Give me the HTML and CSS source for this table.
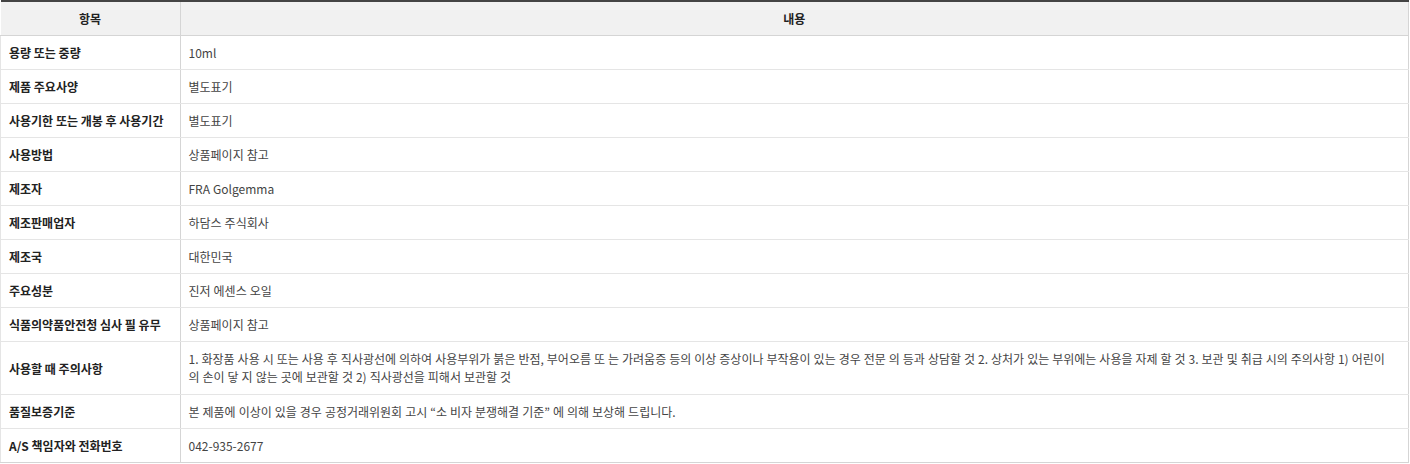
FILE: index.html
```html
<!DOCTYPE html>
<html>
<head>
    <meta charset="utf-8">
    <title>상품정보 제공고시</title>
    <link rel="stylesheet" href="styles.css">
</head>
<body>

<table class="info-table">
    <thead>
        <tr>
            <th class="col-key">항목</th>
            <th>내용</th>
        </tr>
    </thead>
    <tbody>
        <tr><th>용량 또는 중량</th><td>10ml</td></tr>
        <tr><th>제품 주요사양</th><td>별도표기</td></tr>
        <tr><th>사용기한 또는 개봉 후 사용기간</th><td>별도표기</td></tr>
        <tr><th>사용방법</th><td>상품페이지 참고</td></tr>
        <tr><th>제조자</th><td>FRA Golgemma</td></tr>
        <tr><th>제조판매업자</th><td>하담스 주식회사</td></tr>
        <tr><th>제조국</th><td>대한민국</td></tr>
        <tr><th>주요성분</th><td>진저 에센스 오일</td></tr>
        <tr><th>식품의약품안전청 심사 필 유무</th><td>상품페이지 참고</td></tr>
        <tr><th>사용할 때 주의사항</th><td class="long">1. 화장품 사용 시 또는 사용 후 직사광선에 의하여 사용부위가 붉은 반점, 부어오름 또 는 가려움증 등의 이상 증상이나 부작용이 있는 경우 전문 의 등과 상담할 것 2. 상처가 있는 부위에는 사용을 자제 할 것 3. 보관 및 취급 시의 주의사항 1) 어린이의 손이 닿 지 않는 곳에 보관할 것 2) 직사광선을 피해서 보관할 것</td></tr>
        <tr><th>품질보증기준</th><td>본 제품에 이상이 있을 경우 공정거래위원회 고시 “소 비자 분쟁해결 기준” 에 의해 보상해 드립니다.</td></tr>
        <tr><th>A/S 책임자와 전화번호</th><td>042-935-2677</td></tr>
    </tbody>
</table>

</body>
</html>
```

FILE: styles.css
```css
body {
    margin: 0;
    font-family: "Noto Sans CJK KR", "Noto Sans", sans-serif;
    font-size: 12px;
    color: #333;
    background-color: #fff;
}

.info-table {
    width: 1409px;
    border-collapse: collapse;
    border-top: 2px solid #444;
    table-layout: fixed;
}

.info-table th,
.info-table td {
    padding: 8px 8px 7px 8px;
    line-height: 18px;
    text-align: left;
    vertical-align: middle;
    border-bottom: 1px solid #e5e5e5;
}

.info-table th {
    font-weight: bold;
    color: #222;
    border-right: 1px solid #d5d5d5;
}

.info-table td {
    border-right: 1px solid #d5d5d5;
    color: #444;
    word-spacing: 0.3px;
}

.info-table td.long {
    padding-right: 18px;
    padding-bottom: 8px;
}

.info-table tbody tr:last-child th,
.info-table tbody tr:last-child td {
    border-bottom: 1px solid #d5d5d5;
}

.info-table thead th {
    background-color: #f1f1f1;
    text-align: center;
    border-bottom: 1px solid #d5d5d5;
}

.info-table tbody th {
    border-left: 1px solid #e5e5e5;
}

.col-key {
    width: 163px;
}
```
